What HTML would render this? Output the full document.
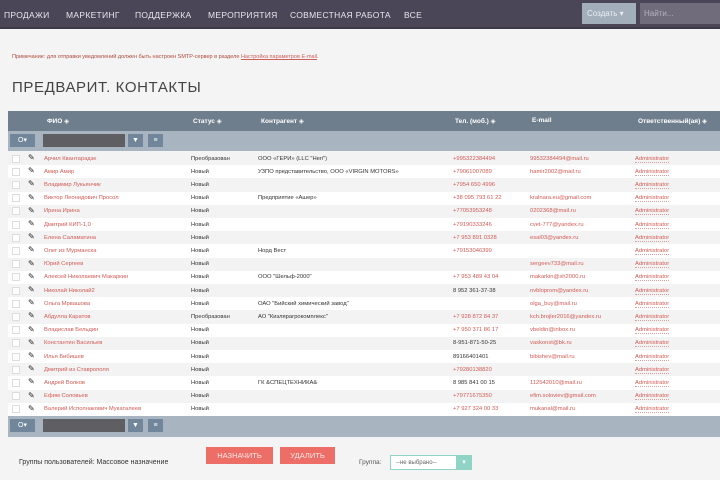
<!DOCTYPE html>
<html><head><meta charset="utf-8"><style>
*{margin:0;padding:0;box-sizing:border-box}
body{width:720px;height:480px;overflow:hidden;background:#f4f4f5;font-family:"Liberation Sans","DejaVu Sans",sans-serif;position:relative}
.nav{position:absolute;left:0;top:0;width:720px;height:29px;background:#4b4657;border-bottom:2px solid #3c3846}
.nav span{position:absolute;top:10px;color:#e8e6ee;font-size:8.5px;letter-spacing:.3px}
.create{position:absolute;left:582px;top:3px;width:54px;height:21px;background:#a3aebb;color:#e9eef3;font-size:8px;padding:6px 0 0 5px}
.search{position:absolute;left:640px;top:3px;width:80px;height:21px;background:#716c7c;color:#b5b1bd;font-size:8px;padding:6px 0 0 4px}
.note{position:absolute;left:12px;top:54px;font-size:5.5px;color:#b04a3a}
.note u{color:#d0605a}
h1{position:absolute;left:12px;top:79px;font-weight:normal;font-size:15px;color:#444;letter-spacing:.6px}
.hdr{position:absolute;left:8px;top:111px;width:712px;height:20px;background:#6f7e8d}
.hdr span{position:absolute;top:6px;color:#fff;font-size:6.5px;font-weight:bold}
.tb{position:absolute;left:8px;width:712px;height:20px;background:#a8b5c1}
.b1{position:absolute;left:2px;top:3px;width:25px;height:13px;background:#71869a;color:#fff;font-size:7px;text-align:center;line-height:13px}
.b2{position:absolute;left:35px;top:3px;width:82px;height:13px;background:#5e5e63}
.b3{position:absolute;left:120px;top:3px;width:15px;height:13px;background:#71869a;color:#fff;font-size:7px;text-align:center;line-height:13px}
.b4{position:absolute;left:140px;top:3px;width:15px;height:13px;background:#71869a;color:#fff;font-size:7px;text-align:center;line-height:13px}
.row{position:absolute;left:8px;width:712px;height:13.2px;font-size:5.8px;color:#333}
.row:nth-child(odd){background:#f3f3f4}.row:nth-child(even){background:#fff}
.row span{position:absolute;top:3.5px;white-space:nowrap}
.cb{position:absolute;left:4px;top:2.5px;width:8px;height:8px;border:1px solid #ddd;background:#fff}
.pen{left:20px;font-size:8px!important;top:1px!important;color:#222}
.n{left:36px;color:#d35b55}.s{left:183px}.k{left:250px}.p{left:445px;color:#d35b55}.e{left:522px;color:#d35b55}.a{left:627px;color:#d35b55;border-bottom:1px dotted #d9a0a0}
.blk{color:#333!important}
.btn{position:absolute;top:447px;height:17px;color:#fce8e6;font-size:7.5px;text-align:center;line-height:17px;background:#ec6e66}
</style></head><body>
<div class="nav">
<span style="left:4px">ПРОДАЖИ</span><span style="left:66px">МАРКЕТИНГ</span><span style="left:135px">ПОДДЕРЖКА</span><span style="left:208px">МЕРОПРИЯТИЯ</span><span style="left:290px">СОВМЕСТНАЯ РАБОТА</span><span style="left:404px">ВСЕ</span>
<div class="create">Создать ▾</div><div class="search">Найти...</div>
</div>
<div class="note">Примечание: для отправки уведомлений должен быть настроен SMTP-сервер в разделе <u>Настройка параметров E-mail</u>.</div>
<h1>ПРЕДВАРИТ. КОНТАКТЫ</h1>
<div class="hdr"><span style="left:39px">ФИО ◈</span><span style="left:185px">Статус ◈</span><span style="left:253px">Контрагент ◈</span><span style="left:447px">Тел. (моб.) ◈</span><span style="left:524px">E-mail</span><span style="left:630px">Ответственный(ая) ◈</span></div>
<div class="tb" style="top:131px"><div class="b1">O▾</div><div class="b2"></div><div class="b3">▼</div><div class="b4">≡</div></div>
<div style="position:absolute;left:0;top:152px;width:720px;height:264px">
<div class="row" style="top:0"><div class="cb"></div><span class="pen">✎</span><span class="n">Арчил Квантарадзе</span><span class="s">Преобразован</span><span class="k">ООО «ГЕРИ» (LLC "Heri")</span><span class="p">+995322384494</span><span class="e">99532384494@mail.ru</span><span class="a">Administrator</span></div>
<div class="row" style="top:13.2px"><div class="cb"></div><span class="pen">✎</span><span class="n">Амир Амир</span><span class="s">Новый</span><span class="k">УЗПО представительство, ООО «VIRGIN MOTORS»</span><span class="p">+79061007089</span><span class="e">hamir2002@mail.ru</span><span class="a">Administrator</span></div>
<div class="row" style="top:26.4px"><div class="cb"></div><span class="pen">✎</span><span class="n">Владимир Лукьянчик</span><span class="s">Новый</span><span class="p">+7954 650 4996</span><span class="a">Administrator</span></div>
<div class="row" style="top:39.6px"><div class="cb"></div><span class="pen">✎</span><span class="n">Виктор Леонидович Просол</span><span class="s">Новый</span><span class="k">Предприятие «Ашер»</span><span class="p">+38 095 793 61 22</span><span class="e">kralnara.eu@gmail.com</span><span class="a">Administrator</span></div>
<div class="row" style="top:52.8px"><div class="cb"></div><span class="pen">✎</span><span class="n">Ирина Ирина</span><span class="s">Новый</span><span class="p">+77053953248</span><span class="e">0202368@mail.ru</span><span class="a">Administrator</span></div>
<div class="row" style="top:66px"><div class="cb"></div><span class="pen">✎</span><span class="n">Дмитрий КИП-1,0</span><span class="s">Новый</span><span class="p">+79190333246</span><span class="e">cvet-777@yandex.ru</span><span class="a">Administrator</span></div>
<div class="row" style="top:79.2px"><div class="cb"></div><span class="pen">✎</span><span class="n">Елена Саламатина</span><span class="s">Новый</span><span class="p">+7 953 891 0328</span><span class="e">esal03@yandex.ru</span><span class="a">Administrator</span></div>
<div class="row" style="top:92.4px"><div class="cb"></div><span class="pen">✎</span><span class="n">Олег из Мурманска</span><span class="s">Новый</span><span class="k">Норд Вест</span><span class="p">+79153046399</span><span class="a">Administrator</span></div>
<div class="row" style="top:105.6px"><div class="cb"></div><span class="pen">✎</span><span class="n">Юрий Сергеев</span><span class="s">Новый</span><span class="e">sergeev733@mail.ru</span><span class="a">Administrator</span></div>
<div class="row" style="top:118.8px"><div class="cb"></div><span class="pen">✎</span><span class="n">Алексей Николаевич Макаркин</span><span class="s">Новый</span><span class="k">ООО "Шельф-2000"</span><span class="p">+7 953 489 43 04</span><span class="e">makarkin@sh2000.ru</span><span class="a">Administrator</span></div>
<div class="row" style="top:132px"><div class="cb"></div><span class="pen">✎</span><span class="n">Николай Николай2</span><span class="s">Новый</span><span class="p blk">8 952 361-37-38</span><span class="e">nvbloprom@yandex.ru</span><span class="a">Administrator</span></div>
<div class="row" style="top:145.2px"><div class="cb"></div><span class="pen">✎</span><span class="n">Ольга Мрвашова</span><span class="s">Новый</span><span class="k">ОАО "Бийский химический завод"</span><span class="e">olga_buy@mail.ru</span><span class="a">Administrator</span></div>
<div class="row" style="top:158.4px"><div class="cb"></div><span class="pen">✎</span><span class="n">Абдулла Каратов</span><span class="s">Преобразован</span><span class="k">АО "Кизлярагрокомплекс"</span><span class="p">+7 928 872 84 37</span><span class="e">kch.brojler2016@yandex.ru</span><span class="a">Administrator</span></div>
<div class="row" style="top:171.6px"><div class="cb"></div><span class="pen">✎</span><span class="n">Владислав Бельдин</span><span class="s">Новый</span><span class="p">+7 950 371 86 17</span><span class="e">vbeldin@inbox.ru</span><span class="a">Administrator</span></div>
<div class="row" style="top:184.8px"><div class="cb"></div><span class="pen">✎</span><span class="n">Константин Васильев</span><span class="s">Новый</span><span class="p blk">8-951-871-50-25</span><span class="e">vaskonst@bk.ru</span><span class="a">Administrator</span></div>
<div class="row" style="top:198px"><div class="cb"></div><span class="pen">✎</span><span class="n">Илья Бибишев</span><span class="s">Новый</span><span class="p blk">89166401401</span><span class="e">bibishev@mail.ru</span><span class="a">Administrator</span></div>
<div class="row" style="top:211.2px"><div class="cb"></div><span class="pen">✎</span><span class="n">Дмитрий из Ставрополя</span><span class="s">Новый</span><span class="p">+79280138820</span><span class="a">Administrator</span></div>
<div class="row" style="top:224.4px"><div class="cb"></div><span class="pen">✎</span><span class="n">Андрей Волков</span><span class="s">Новый</span><span class="k">ГК &amp;СПЕЦТЕХНИКА&amp;</span><span class="p blk">8 985 841 00 15</span><span class="e">112542010@mail.ru</span><span class="a">Administrator</span></div>
<div class="row" style="top:237.6px"><div class="cb"></div><span class="pen">✎</span><span class="n">Ефим Соловьев</span><span class="s">Новый</span><span class="p">+79771675350</span><span class="e">efim.soloviev@gmail.com</span><span class="a">Administrator</span></div>
<div class="row" style="top:250.8px"><div class="cb"></div><span class="pen">✎</span><span class="n">Валерий Исполнакович Мукаталеев</span><span class="s">Новый</span><span class="p">+7 927 324 00 33</span><span class="e">mukanal@mail.ru</span><span class="a">Administrator</span></div>
</div>
<div class="tb" style="top:416px;height:21px"><div class="b1">O▾</div><div class="b2"></div><div class="b3">▼</div><div class="b4">≡</div></div>
<div style="position:absolute;left:19px;top:459px;font-size:7px;color:#333">Группы пользователей: Массовое назначение</div>
<div class="btn" style="left:206px;width:67px">НАЗНАЧИТЬ</div>
<div class="btn" style="left:280px;width:55px">УДАЛИТЬ</div>
<div style="position:absolute;left:359px;top:459px;font-size:6.5px;color:#555">Группа:</div>
<div style="position:absolute;left:390px;top:455px;width:82px;height:15px;border:1px solid #8fd4c4;background:#fff;font-size:6px;color:#666;padding:4px 0 0 5px">--не выбрано--</div>
<div style="position:absolute;left:456px;top:455px;width:16px;height:15px;background:#8fd4c4;color:#fff;font-size:7px;text-align:center;line-height:15px">▾</div>
</body></html>
